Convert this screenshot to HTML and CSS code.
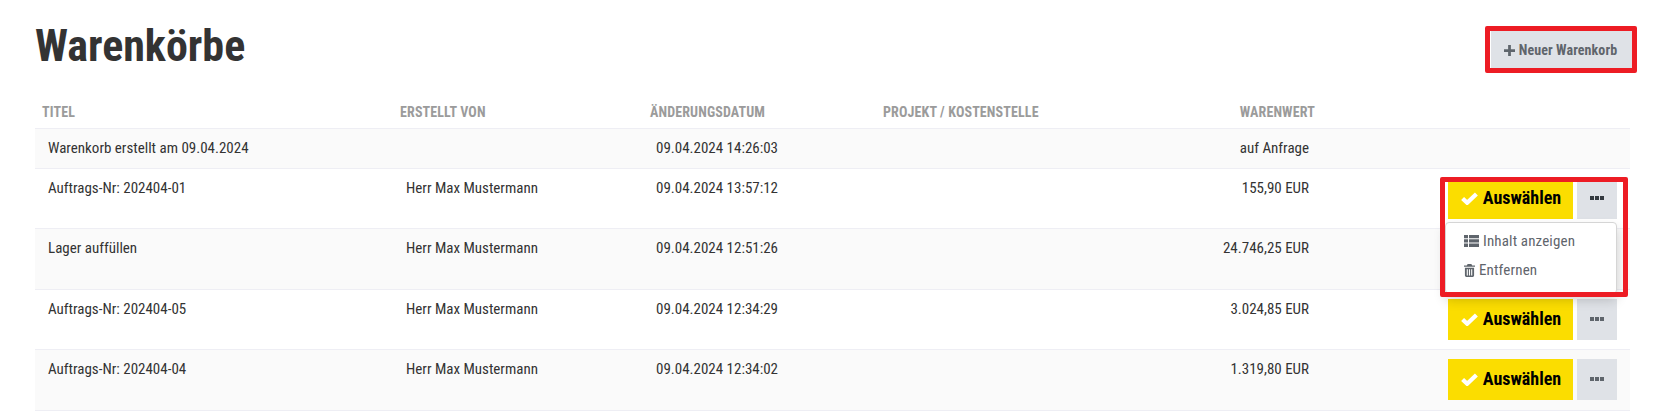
FILE: index.html
```html
<!DOCTYPE html>
<html lang="de">
<head>
<meta charset="utf-8">
<title>Warenkörbe</title>
<link rel="stylesheet" href="styles.css">
</head>
<body>
<main class="page">
  <header class="head">
    <h1 class="title">Warenkörbe</h1>
    <button class="new-btn"><svg class="ico-plus" viewBox="0 0 12 12"><path d="M4.500 0h3v4.500H12v3H7.500V12h-3V7.500H0v-3h4.500z"/></svg>Neuer Warenkorb</button>
  </header>
  <table class="tbl">
    <colgroup><col class="c1"><col class="c2"><col class="c3"><col class="c4"><col class="c5"><col class="c6"></colgroup>
    <thead>
      <tr><th>Titel</th><th>Erstellt von</th><th>Änderungsdatum</th><th>Projekt / Kostenstelle</th><th class="num">Warenwert</th><th></th></tr>
    </thead>
    <tbody>
      <tr class="short"><td>Warenkorb erstellt am 09.04.2024</td><td></td><td>09.04.2024 14:26:03</td><td></td><td class="num">auf Anfrage</td><td></td></tr>
      <tr class="even"><td>Auftrags-Nr: 202404-01</td><td>Herr Max Mustermann</td><td>09.04.2024 13:57:12</td><td></td><td class="num">155,90 EUR</td><td class="act">
        <div class="actions"><button class="pick"><svg class="ico-check" viewBox="0 0 16 12"><path d="M1.500 6 5.800 10 14.500 1.800"/></svg>Auswählen</button><button class="more open"><svg class="ico-dots" viewBox="0 0 14 4"><path d="M0 0h4v4H0zM5 0h4v4H5zM10 0h4v4h-4z"/></svg></button>
          <div class="menu">
            <div class="menu-item"><svg class="ico-list" viewBox="0 0 15 12"><path d="M0 0h4v3.300H0zM5 0h10v3.300H5zM0 4.300h4v3.300H0zM5 4.300h10v3.300H5zM0 8.600h4V12H0zM5 8.600h10V12H5z"/></svg>Inhalt anzeigen</div>
            <div class="menu-item"><svg class="ico-trash" viewBox="0 0 12 14"><path d="M4 0h4l1 1.500h3V3H0V1.500h3zM1 4h10v8.500A1.500 1.500 0 0 1 9.500 14h-7A1.500 1.500 0 0 1 1 12.500zM3 5.500v7h1.200v-7zM5.400 5.500v7h1.200v-7zM7.800 5.500v7H9v-7z" fill-rule="evenodd"/></svg>Entfernen</div>
          </div>
        </div></td></tr>
      <tr class="odd"><td>Lager auffüllen</td><td>Herr Max Mustermann</td><td>09.04.2024 12:51:26</td><td></td><td class="num">24.746,25 EUR</td><td class="act"></td></tr>
      <tr class="even"><td>Auftrags-Nr: 202404-05</td><td>Herr Max Mustermann</td><td>09.04.2024 12:34:29</td><td></td><td class="num">3.024,85 EUR</td><td class="act"><div class="actions"><button class="pick"><svg class="ico-check" viewBox="0 0 16 12"><path d="M1.500 6 5.800 10 14.500 1.800"/></svg>Auswählen</button><button class="more"><svg class="ico-dots" viewBox="0 0 14 4"><path d="M0 0h4v4H0zM5 0h4v4H5zM10 0h4v4h-4z"/></svg></button></div></td></tr>
      <tr class="odd"><td>Auftrags-Nr: 202404-04</td><td>Herr Max Mustermann</td><td>09.04.2024 12:34:02</td><td></td><td class="num">1.319,80 EUR</td><td class="act"><div class="actions"><button class="pick"><svg class="ico-check" viewBox="0 0 16 12"><path d="M1.500 6 5.800 10 14.500 1.800"/></svg>Auswählen</button><button class="more"><svg class="ico-dots" viewBox="0 0 14 4"><path d="M0 0h4v4H0zM5 0h4v4H5zM10 0h4v4h-4z"/></svg></button></div></td></tr>
    </tbody>
  </table>
</main>
<div class="mark mark-top"></div>
<div class="mark mark-row"></div>
</body>
</html>
```

FILE: styles.css
```css
* { box-sizing: border-box; }
html, body { margin: 0; padding: 0; height: 414px; overflow: hidden; background: #fff; }
body { font-family: "Roboto", "Liberation Sans", sans-serif; font-stretch: 75%; color: #333; position: relative; }
.page { padding: 0 34px 0 35px; }
.head { display: flex; justify-content: space-between; align-items: flex-start; height: 97px; }
.title { margin: 20px 0 0; font-size: 44px; line-height: 52px; font-weight: 700; color: #333; }
.new-btn { margin: 31px 0 0 0; position: relative; left: 3px; width: 142px; height: 38px; border: 0; padding: 0 3px 0 0; background: #dfe2e7; color: #5f656c; font: inherit; font-size: 14px; font-weight: 700; letter-spacing: .1px; display: flex; align-items: center; justify-content: center; }
.ico-plus { width: 11px; height: 11px; margin-right: 4px; fill: #5f656c; }
.tbl { width: 1595px; border-collapse: collapse; table-layout: fixed; font-size: 15px; }
.c1 { width: 358px; } .c2 { width: 250px; } .c3 { width: 233px; } .c4 { width: 300px; } .c5 { width: 140px; } .c6 { width: 314px; }
th { height: 31px; padding: 0 7px 8px; text-align: left; font-size: 14px; font-weight: 700; letter-spacing: .13px; color: #9b9b9b; text-transform: uppercase; vertical-align: bottom; border-bottom: 1px solid #eeeef4; }
td { padding: 9px 13px 0; vertical-align: top; color: #333; border-bottom: 1px solid #eeeef4; line-height: 20px; }
.even td { height: 60px; }
.odd td { height: 61px; }
tbody tr:nth-child(odd) td { background: #fafafa; }
.short td { height: 40px; }
th.num { text-align: right; padding-right: 1px; }
td.num { text-align: right; padding-right: 7px; }
td.act { padding: 9px 0 0 132px; }
.actions { display: flex; gap: 4px; position: relative; width: 169px; }
.pick { width: 125px; height: 41px; border: 0; padding: 0 0 0 1px; background: #fbdd00; color: #000; font: inherit; font-size: 18px; font-weight: 700; display: flex; align-items: center; justify-content: center; }
.ico-check { width: 17px; height: 13px; margin-right: 5px; fill: none; stroke: #fff; stroke-width: 4; }
.more { width: 40px; height: 41px; border: 0; background: #dfe2e7; display: flex; align-items: center; justify-content: center; }
.ico-dots { width: 14px; height: 4px; fill: #5f656c; }
.open .ico-dots { fill: #343a40; }
.menu { position: absolute; z-index: 2; left: -3px; top: 44px; width: 172px; height: 72px; background: #fff; border: 1px solid #d5d5d5; border-radius: 4px; box-shadow: 0 6px 12px rgba(0,0,0,.175); padding: 4px 0; color: #5f656c; font-size: 15px; letter-spacing: .15px; }
.menu-item { display: flex; align-items: center; height: 29px; padding-left: 18px; }
.ico-list { width: 15px; height: 12px; margin-right: 4px; fill: #5f656c; }
.ico-trash { width: 11px; height: 13px; margin-right: 4px; fill: #5f656c; }
.mark { position: absolute; z-index: 3; border: 5px solid #ed1c24; border-radius: 2px; pointer-events: none; }
.mark-top { left: 1485px; top: 26px; width: 152px; height: 47px; }
.mark-row { left: 1440px; top: 177px; width: 188px; height: 120px; }
```
